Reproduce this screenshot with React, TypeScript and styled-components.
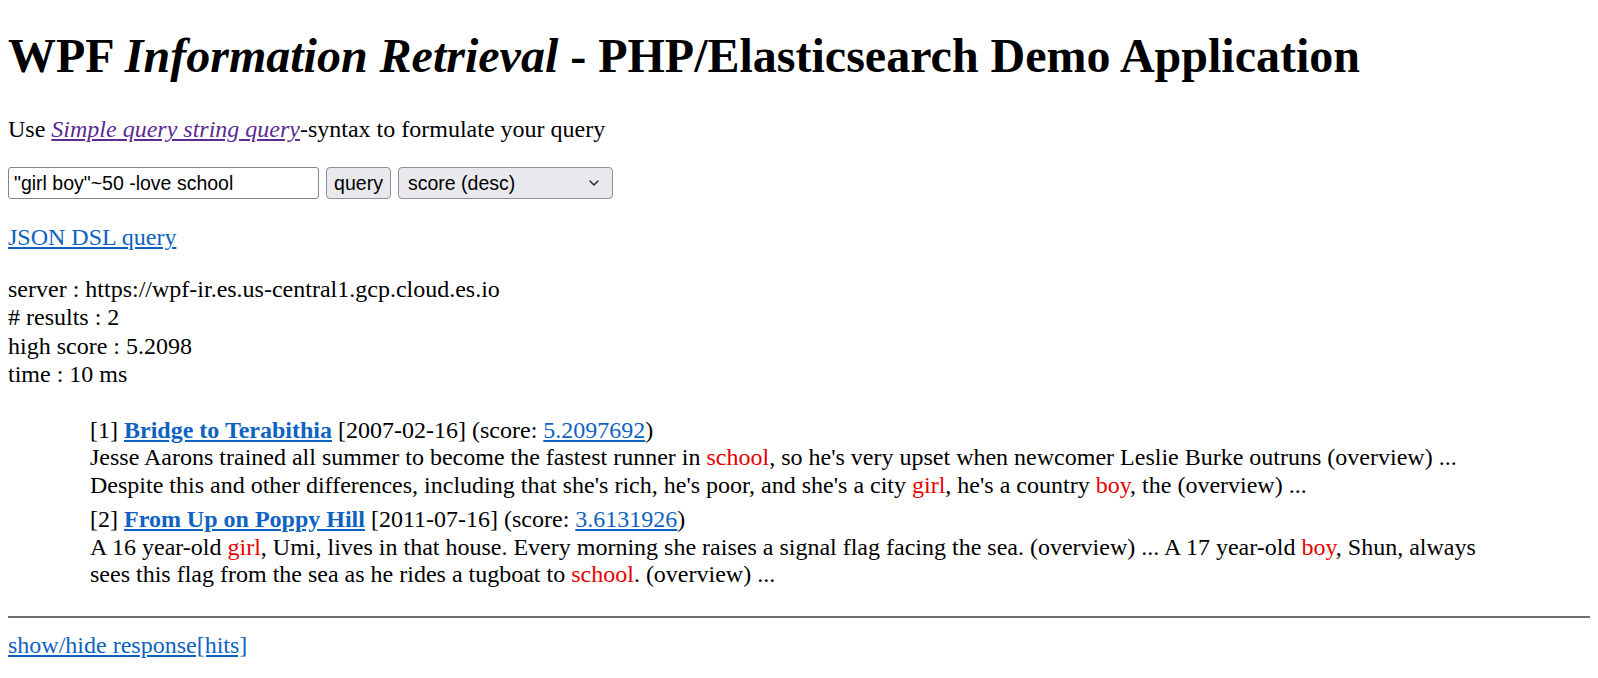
import styled, { createGlobalStyle } from "styled-components";
import { ChevronDown } from "lucide-react";

const GlobalStyle = createGlobalStyle`
    html, body {
        margin: 0;
        padding: 0;
        background: #ffffff;
    }
    body {
        font-family: "Liberation Serif", "Times New Roman", serif;
        font-size: 24px;
        line-height: 28.1px;
        color: #000000;
    }
`

const Page = styled.div`
    padding: 28px 8px 20px;
`

const Title = styled.h1`
    margin: 0 0 32px;
    font-size: 48px;
    line-height: 55.2px;
    font-weight: 700;
    white-space: nowrap;
`

const Para = styled.p`
    margin: 0 0 24px;
`

const Link = styled.a<{ $visited?: boolean; $bold?: boolean }>`
    color: ${p => p.$visited ? "#5b2a92" : "#0d62c2"};
    font-weight: ${p => p.$bold ? 700 : 400};
    text-decoration: underline;
    cursor: pointer;
`

const QueryForm = styled.form`
    display: flex;
    align-items: stretch;
    gap: 7px;
    height: 32px;
    margin: 0 0 24px;
`

const controlFont = `
    font-family: "Liberation Sans", Tahoma, Arial, sans-serif;
    font-size: 19.5px;
    color: #000000;
    box-sizing: border-box;
`

const QueryInput = styled.input`
    ${controlFont}
    width: 311px;
    height: 32px;
    padding: 0 5px;
    border: 1px solid #858585;
    border-radius: 3px;
    background: #ffffff;
    outline: none;
`

const QueryButton = styled.button`
    ${controlFont}
    width: 65px;
    height: 32px;
    padding: 0 6px;
    border: 1px solid #8f8f9d;
    border-radius: 4px;
    background: #e9e9ed;
`

const SelectWrap = styled.div`
    position: relative;
    width: 215px;
    height: 32px;
`

const SortSelect = styled.select`
    ${controlFont}
    appearance: none;
    width: 100%;
    height: 100%;
    padding: 0 30px 0 9px;
    border: 1px solid #8f8f9d;
    border-radius: 4px;
    background: #e9e9ed;
    outline: none;
`

const SelectArrow = styled.span`
    position: absolute;
    right: 11px;
    top: 8px;
    display: flex;
    pointer-events: none;
    color: #202020;
`

const Stats = styled.div`
    margin: 0 0 29px;
`

const Results = styled.div`
    margin: 0 82px 27px;
    line-height: 27.7px;
`

const Result = styled.div`
    & + & {
        margin-top: 6px;
    }
`

const Hit = styled.span`
    color: #e60000;
`

const Rule = styled.hr`
    margin: 0 0 13px;
    height: 0;
    border: none;
    border-top: 2px solid #6f6f6f;
`

type Part = string | { hit: string };

type ResultData = {
    title: string;
    date: string;
    score: string;
    snippet: Part[];
};

const results: ResultData[] = [
    {
        title: "Bridge to Terabithia",
        date: "2007-02-16",
        score: "5.2097692",
        snippet: [
            "Jesse Aarons trained all summer to become the fastest runner in ",
            { hit: "school" },
            ", so he's very upset when newcomer Leslie Burke outruns (overview) ... Despite this and other differences, including that she's rich, he's poor, and she's a city ",
            { hit: "girl" },
            ", he's a country ",
            { hit: "boy" },
            ", the (overview) ...",
        ],
    },
    {
        title: "From Up on Poppy Hill",
        date: "2011-07-16",
        score: "3.6131926",
        snippet: [
            "A 16 year-old ",
            { hit: "girl" },
            ", Umi, lives in that house. Every morning she raises a signal flag facing the sea. (overview) ... A 17 year-old ",
            { hit: "boy" },
            ", Shun, always sees this flag from the sea as he rides a tugboat to ",
            { hit: "school" },
            ". (overview) ...",
        ],
    },
];

function ResultItem(props: { index: number; data: ResultData }) {
    const { index, data } = props;
    return (
        <Result>
            [{index}] <Link $bold>{data.title}</Link> [{data.date}] (score: <Link>{data.score}</Link>)
            <br />
            {data.snippet.map((part, i) =>
                typeof part === "string" ? <span key={i}>{part}</span> : <Hit key={i}>{part.hit}</Hit>
            )}
        </Result>
    );
}

export default function App() {
    return (
        <>
            <GlobalStyle />
            <Page>
                <Title>WPF <i>Information Retrieval</i> - PHP/Elasticsearch Demo Application</Title>
                <Para>
                    Use <Link $visited><i>Simple query string query</i></Link>-syntax to formulate your query
                </Para>
                <QueryForm onSubmit={e => e.preventDefault()}>
                    <QueryInput defaultValue={'"girl boy"~50 -love school'} />
                    <QueryButton type="submit">query</QueryButton>
                    <SelectWrap>
                        <SortSelect defaultValue="score-desc">
                            <option value="score-desc">score (desc)</option>
                            <option value="score-asc">score (asc)</option>
                            <option value="date-desc">date (desc)</option>
                            <option value="date-asc">date (asc)</option>
                        </SortSelect>
                        <SelectArrow><ChevronDown size={16} strokeWidth={2} /></SelectArrow>
                    </SelectWrap>
                </QueryForm>
                <Para><Link>JSON DSL query</Link></Para>
                <Stats>
                    server : https://wpf-ir.es.us-central1.gcp.cloud.es.io<br />
                    # results : 2<br />
                    high score : 5.2098<br />
                    time : 10 ms
                </Stats>
                <Results>
                    {results.map((r, i) => (
                        <ResultItem key={i} index={i + 1} data={r} />
                    ))}
                </Results>
                <Rule />
                <Link>show/hide response[hits]</Link>
            </Page>
        </>
    );
}
